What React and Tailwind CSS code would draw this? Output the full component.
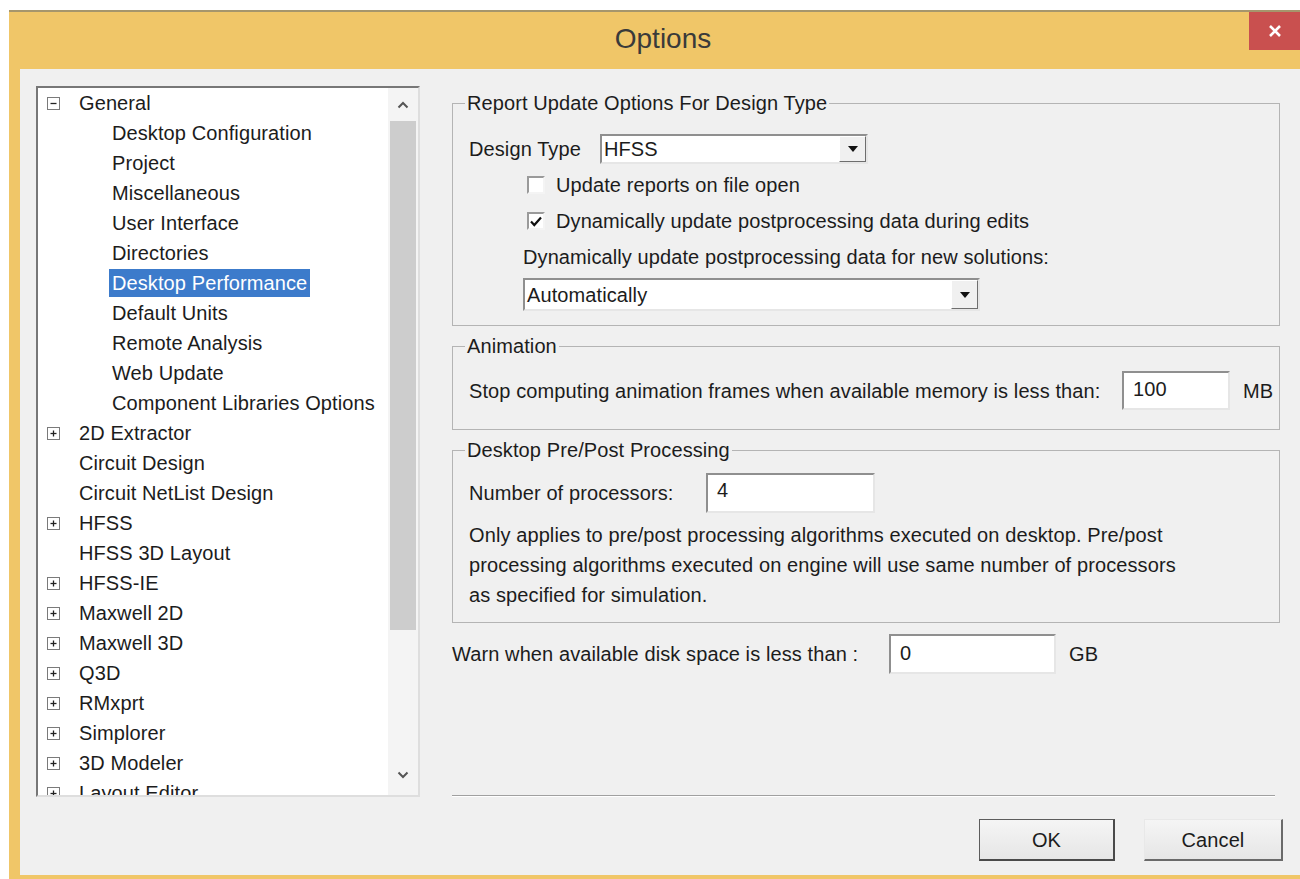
import { useState } from "react";

const treeItems = [
  { label: "General", level: 0, toggle: "minus" },
  { label: "Desktop Configuration", level: 1 },
  { label: "Project", level: 1 },
  { label: "Miscellaneous", level: 1 },
  { label: "User Interface", level: 1 },
  { label: "Directories", level: 1 },
  { label: "Desktop Performance", level: 1 },
  { label: "Default Units", level: 1 },
  { label: "Remote Analysis", level: 1 },
  { label: "Web Update", level: 1 },
  { label: "Component Libraries Options", level: 1 },
  { label: "2D Extractor", level: 0, toggle: "plus" },
  { label: "Circuit Design", level: 0 },
  { label: "Circuit NetList Design", level: 0 },
  { label: "HFSS", level: 0, toggle: "plus" },
  { label: "HFSS 3D Layout", level: 0 },
  { label: "HFSS-IE", level: 0, toggle: "plus" },
  { label: "Maxwell 2D", level: 0, toggle: "plus" },
  { label: "Maxwell 3D", level: 0, toggle: "plus" },
  { label: "Q3D", level: 0, toggle: "plus" },
  { label: "RMxprt", level: 0, toggle: "plus" },
  { label: "Simplorer", level: 0, toggle: "plus" },
  { label: "3D Modeler", level: 0, toggle: "plus" },
  { label: "Layout Editor", level: 0, toggle: "plus" },
];

const sunken =
  "border-2 border-t-[#8f8f8f] border-l-[#8f8f8f] border-r-[#e6e6e6] border-b-[#e6e6e6]";

const ToggleBox = ({ kind }) => (
  <span className="flex h-[13px] w-[13px] items-center justify-center border border-[#7a7a7a] bg-white">
    <svg width="9" height="9" viewBox="0 0 9 9">
      <path d="M1.5 4.5h6" stroke="#222" strokeWidth="1.3" />
      {kind === "plus" && <path d="M4.5 1.5v6" stroke="#222" strokeWidth="1.3" />}
    </svg>
  </span>
);

const Chevron = ({ up }) => (
  <svg width="12" height="8" viewBox="0 0 12 8">
    <path
      d={up ? "M1.5 6.5L6 2l4.5 4.5" : "M1.5 1.5L6 6l4.5-4.5"}
      fill="none"
      stroke="#555"
      strokeWidth="2"
    />
  </svg>
);

const DropArrow = () => (
  <span className="flex h-full w-[27px] items-center justify-center border border-t-white border-l-white border-r-[#6e6e6e] border-b-[#6e6e6e] bg-[#f0f0f0]">
    <svg width="10" height="6" viewBox="0 0 10 6">
      <path d="M0 0h10L5 6z" fill="#111" />
    </svg>
  </span>
);

const Select = ({ value, className }) => (
  <div className={`flex items-stretch bg-white ${sunken} ${className}`}>
    <span className="flex flex-1 items-center pl-[2px]">{value}</span>
    <DropArrow />
  </div>
);

const Checkbox = ({ checked, label }) => (
  <label className="flex h-[36px] items-center gap-[11px]">
    <span className="flex h-[18px] w-[18px] items-center justify-center border-2 border-t-[#9a9a9a] border-l-[#9a9a9a] border-r-[#f4f4f4] border-b-[#f4f4f4] bg-white">
      {checked && (
        <svg width="12" height="11" viewBox="0 0 12 11">
          <path d="M1 5.5l3.3 3.5L11 1.5" fill="none" stroke="#111" strokeWidth="2.2" />
        </svg>
      )}
    </span>
    <span>{label}</span>
  </label>
);

const TextBox = ({ value, className }) => (
  <div className={`flex items-center bg-white pb-[3px] pl-[9px] ${sunken} ${className}`}>
    {value}
  </div>
);

const Group = ({ title, className, children }) => (
  <fieldset className={`border border-[#b4b4b4] ${className}`}>
    <legend className="ml-[12px] px-[2px] leading-[22px]">{title}</legend>
    {children}
  </fieldset>
);

const Button = ({ label, primary, className }) => (
  <button
    className={`flex h-[42px] items-center justify-center border bg-gradient-to-b from-[#f5f5f5] to-[#e6e6e6] ${
      primary
        ? "border-[#5c5c5c] border-r-2 border-b-2 border-r-[#4a4a4a] border-b-[#4a4a4a]"
        : "border-t-[#e8e8e8] border-l-[#e8e8e8] border-r-2 border-b-2 border-r-[#6a6a6a] border-b-[#6a6a6a]"
    } ${className}`}
  >
    {label}
  </button>
);

const OptionsTree = () => {
  const [selected, setSelected] = useState("Desktop Performance");

  return (
    <div className="flex h-[711px] w-[384px] border-2 border-t-[#777] border-l-[#777] border-r-[#dedede] border-b-[#dedede] bg-white">
      <ul className="flex-1 overflow-hidden">
        {treeItems.map((item) => (
          <li
            key={item.label}
            className={`flex h-[30px] items-center ${item.level ? "pl-[71px]" : "pl-[9px]"}`}
          >
            {item.level === 0 && (
              <span className="mr-[15px] w-[14px]">
                {item.toggle && <ToggleBox kind={item.toggle} />}
              </span>
            )}
            <span
              onClick={() => setSelected(item.label)}
              className={`flex h-[28px] items-center whitespace-nowrap px-[3px] ${
                selected === item.label ? "bg-[#3c7bcb] text-white" : ""
              }`}
            >
              {item.label}
            </span>
          </li>
        ))}
      </ul>
      <div className="flex w-[30px] flex-col bg-[#f4f4f4]">
        <div className="flex h-[33px] items-center justify-center">
          <Chevron up />
        </div>
        <div className="mx-[2px] h-[509px] bg-[#cdcdcd]" />
        <div className="flex flex-1 items-end justify-center pb-[16px]">
          <Chevron />
        </div>
      </div>
    </div>
  );
};

export default function App() {
  return (
    <div className="h-[879px] w-[1300px] overflow-hidden bg-white pl-[9px] pt-[10px] font-['Liberation_Sans',Arial,sans-serif] text-[20px] tracking-[0.1px] text-[#1c1c1c]">
      <div className="flex w-[1291px] flex-col border-t-2 border-t-[#a6966c] bg-[#f0c668] pl-[11px] pb-[4px]">
        {/* title bar */}
        <div className="-ml-[11px] flex h-[57px] items-start">
          <div className="flex h-full flex-1 items-center justify-center pl-[68px] pb-[4px] text-[28px] tracking-normal text-[#3a3a3a]">
            Options
          </div>
          <button className="flex h-[38px] w-[51px] items-center justify-center bg-[#c9504f]">
            <svg width="14" height="14" viewBox="0 0 14 14">
              <path d="M2 2l10 10M12 2L2 12" stroke="#fff" strokeWidth="2.6" />
            </svg>
          </button>
        </div>

        <div className="flex h-[806px] flex-col bg-[#f0f0f0]">
          <div className="flex pl-[16px] pt-[17px]">
            <OptionsTree />

            <div className="ml-[32px] flex h-[711px] w-[828px] flex-col pt-[6px]">
              <Group title="Report Update Options For Design Type" className="pb-[14px]">
                <div className="pl-[16px]">
                  <div className="mt-[20px] flex h-[30px] items-center">
                    <span className="w-[131px]">Design Type</span>
                    <Select value="HFSS" className="h-[30px] w-[268px]" />
                  </div>
                  <div className="mt-[3px] pl-[58px]">
                    <Checkbox label="Update reports on file open" />
                    <Checkbox checked label="Dynamically update postprocessing data during edits" />
                  </div>
                  <div className="flex h-[36px] items-center pl-[54px]">
                    Dynamically update postprocessing data for new solutions:
                  </div>
                  <div className="mt-[3px] pl-[54px]">
                    <Select value="Automatically" className="h-[33px] w-[457px]" />
                  </div>
                </div>
              </Group>

              <Group title="Animation" className="mt-[9px] pb-[19px]">
                <div className="mt-[14px] flex h-[39px] items-center pl-[16px]">
                  <span className="w-[653px]">
                    Stop computing animation frames when available memory is less than:
                  </span>
                  <TextBox value="100" className="h-[39px] w-[108px]" />
                  <span className="ml-[13px]">MB</span>
                </div>
              </Group>

              <Group title="Desktop Pre/Post Processing" className="mt-[9px] pb-[12px]">
                <div className="pl-[16px]">
                  <div className="mt-[12px] flex h-[40px] items-center">
                    <span className="w-[237px]">Number of processors:</span>
                    <TextBox value="4" className="h-[40px] w-[169px] pb-[6px]" />
                  </div>
                  <p className="mt-[7px] leading-[30px]">
                    Only applies to pre/post processing algorithms executed on desktop. Pre/post
                    <br />
                    processing algorithms executed on engine will use same number of processors
                    <br />
                    as specified for simulation.
                  </p>
                </div>
              </Group>

              <div className="mt-[11px] flex h-[40px] items-center">
                <span className="w-[437px]">Warn when available disk space is less than :</span>
                <TextBox value="0" className="h-[40px] w-[167px]" />
                <span className="ml-[13px]">GB</span>
              </div>

              <div className="mt-auto h-[2px] w-[823px] border-t border-b border-t-[#a0a0a0] border-b-white" />
            </div>
          </div>

          <div className="flex justify-end gap-[29px] pr-[17px] pt-[22px]">
            <Button primary label="OK" className="w-[136px]" />
            <Button label="Cancel" className="w-[139px]" />
          </div>
        </div>
      </div>
    </div>
  );
}
